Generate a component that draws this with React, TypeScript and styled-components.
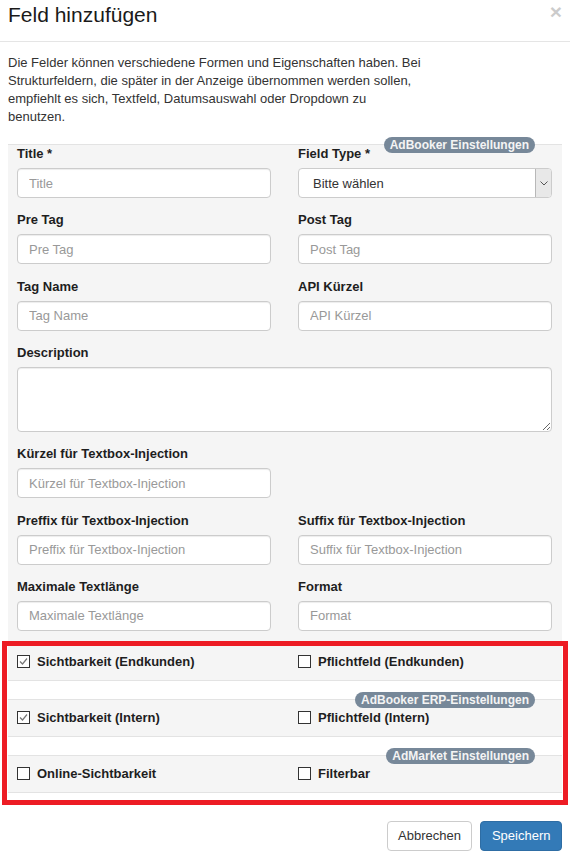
import styled, { createGlobalStyle } from "styled-components";

const GlobalStyle = createGlobalStyle`
  * {
    box-sizing: border-box;
  }
  html,
  body {
    margin: 0;
    background: #fff;
    overflow: hidden;
  }
  body {
    font-family: "Liberation Sans", Arial, sans-serif;
    font-size: 13px;
    color: #333;
  }
`;

const Modal = styled.div`
  width: 570px;
`;

const Header = styled.header`
  display: flex;
  justify-content: space-between;
  align-items: flex-start;
  height: 42px;
  padding: 0 8px;
  border-bottom: 1px solid #e5e5e5;
`;

const Title = styled.h4`
  margin: 0;
  font-size: 21px;
  font-weight: normal;
  line-height: 29px;
  color: #1a1a1a;
`;

const Close = styled.button`
  padding: 0;
  border: 0;
  background: none;
  font-family: inherit;
  font-size: 21px;
  font-weight: bold;
  line-height: 23px;
  color: #000;
  opacity: 0.2;
  cursor: pointer;
`;

const Body = styled.div`
  padding: 12px 8px 13px;
`;

const Intro = styled.p`
  margin: 0 0 18px;
  font-size: 13px;
  line-height: 18px;
  color: #333;
  white-space: nowrap;
`;

// grey settings block; $open drops the bottom edge so the next block continues it
const Panel = styled.section<{ $open?: boolean; $gap?: boolean }>`
  position: relative;
  background: #f5f5f5;
  border-top: 1px solid #e3e3e3;
  border-bottom: ${(p) => (p.$open ? "0" : "1px solid #e3e3e3")};
  margin-top: ${(p) => (p.$gap ? "18px" : "0")};
  padding: 0 10px 0 9px;
`;

const PanelTail = styled.div`
  background: #f5f5f5;
  border-bottom: 1px solid #e3e3e3;
  padding: 0 10px 0 9px;
`;

const Badge = styled.span`
  position: absolute;
  top: -8px;
  right: 27px;
  height: 16px;
  padding: 0 6px;
  border-radius: 8px;
  background: #778899;
  color: #f4f4f4;
  font-size: 12px;
  font-weight: bold;
  line-height: 16px;
  white-space: nowrap;
`;

const FieldGrid = styled.div`
  display: grid;
  grid-template-columns: 1fr 1fr;
  column-gap: 27px;
  row-gap: 13.33px;
  padding-bottom: 13px;
`;

const Field = styled.div<{ $wide?: boolean; $newRow?: boolean }>`
  display: flex;
  flex-direction: column;
  grid-column: ${(p) => (p.$wide ? "1 / -1" : p.$newRow ? "1" : "auto")};
`;

const Label = styled.label`
  display: block;
  margin-bottom: 5px;
  font-size: 13px;
  font-weight: bold;
  line-height: 18px;
  color: #1e1e1e;
`;

const Input = styled.input`
  width: 100%;
  height: 30px;
  padding: 0 11px;
  border: 1px solid #ccc;
  border-radius: 4px;
  box-shadow: inset 0 1px 1px rgba(0, 0, 0, 0.075);
  background: #fff;
  font-family: inherit;
  font-size: 13px;
  color: #555;
  &::placeholder {
    color: #999;
  }
`;

const TextArea = styled.textarea`
  width: 100%;
  height: 65px;
  padding: 6px 11px;
  border: 1px solid #ccc;
  border-radius: 4px;
  box-shadow: inset 0 1px 1px rgba(0, 0, 0, 0.075);
  font-family: inherit;
  font-size: 13px;
  resize: vertical;
`;

const SelectBox = styled.div`
  display: flex;
  height: 30px;
  border: 1px solid #ccc;
  border-radius: 4px;
  background: #fff;
  overflow: hidden;
`;

const Select = styled.select`
  flex: 1;
  appearance: none;
  border: 0;
  background: transparent;
  padding: 0 14px;
  font-family: inherit;
  font-size: 13px;
  color: #333;
  outline: none;
`;

const Arrow = styled.span`
  display: flex;
  align-items: center;
  justify-content: center;
  width: 16px;
  background: #e8e8e8;
  border-left: 1px solid #b8b8b8;
`;

const Highlight = styled.div`
  position: relative;
  &::after {
    content: "";
    position: absolute;
    top: -3px;
    left: -6px;
    right: -6px;
    bottom: -12px;
    border: 5px solid #ed1c24;
    pointer-events: none;
  }
`;

const FlagRow = styled.div`
  display: grid;
  grid-template-columns: 1fr 1fr;
  column-gap: 27px;
  align-items: center;
  height: 36px;
`;

const Check = styled.label`
  display: flex;
  align-items: center;
  gap: 7px;
  font-size: 13px;
  font-weight: bold;
  color: #1e1e1e;
`;

const Box = styled.span`
  display: flex;
  align-items: center;
  justify-content: center;
  width: 13px;
  height: 13px;
  border: 1px solid #333;
  background: #fff;
`;

const Footer = styled.footer`
  display: flex;
  justify-content: flex-end;
  gap: 8px;
  padding: 15px 8px 6px;
`;

const Button = styled.button<{ $primary?: boolean }>`
  height: 30px;
  padding: 0 10.5px;
  border-radius: 4px;
  border: 1px solid ${(p) => (p.$primary ? "#2e6da4" : "#ccc")};
  background: ${(p) => (p.$primary ? "#337ab7" : "#fff")};
  color: ${(p) => (p.$primary ? "#fff" : "#333")};
  font-family: inherit;
  font-size: 13px;
  cursor: pointer;
`;

const Flag = ({ label, checked }: { label: string; checked?: boolean }) => (
  <Check>
    <Box>
      {checked && (
        <svg width="11" height="11" viewBox="0 0 11 11">
          <path d="M2 5.5 L4.5 8 L9 2.5" fill="none" stroke="#777" strokeWidth="1.2" />
        </svg>
      )}
    </Box>
    {label}
  </Check>
);

const TextField = ({ label, wide, newRow }: { label: string; wide?: boolean; newRow?: boolean }) => (
  <Field $wide={wide} $newRow={newRow}>
    <Label>{label}</Label>
    <Input placeholder={label} />
  </Field>
);

const App = () => (
  <Modal>
    <GlobalStyle />
    <Header>
      <Title>Feld hinzufügen</Title>
      <Close>×</Close>
    </Header>
    <Body>
      <Intro>
        Die Felder können verschiedene Formen und Eigenschaften haben. Bei
        <br />
        Strukturfeldern, die später in der Anzeige übernommen werden sollen,
        <br />
        empfiehlt es sich, Textfeld, Datumsauswahl oder Dropdown zu
        <br />
        benutzen.
      </Intro>

      <Panel $open>
        <Badge>AdBooker Einstellungen</Badge>
        <FieldGrid>
          <Field>
            <Label>Title *</Label>
            <Input placeholder="Title" />
          </Field>
          <Field>
            <Label>Field Type *</Label>
            <SelectBox>
              <Select defaultValue="">
                <option value="">Bitte wählen</option>
              </Select>
              <Arrow>
                <svg width="8" height="5" viewBox="0 0 8 5">
                  <path d="M0.5 0.5 L4 4 L7.5 0.5" fill="none" stroke="#555" strokeWidth="1" />
                </svg>
              </Arrow>
            </SelectBox>
          </Field>
          <TextField label="Pre Tag" />
          <TextField label="Post Tag" />
          <TextField label="Tag Name" />
          <TextField label="API Kürzel" />
          <Field $wide>
            <Label>Description</Label>
            <TextArea />
          </Field>
          <TextField label="Kürzel für Textbox-Injection" />
          <TextField label="Preffix für Textbox-Injection" newRow />
          <TextField label="Suffix für Textbox-Injection" />
          <TextField label="Maximale Textlänge" />
          <TextField label="Format" />
        </FieldGrid>
      </Panel>

      <Highlight>
        <PanelTail>
          <FlagRow>
            <Flag label="Sichtbarkeit (Endkunden)" checked />
            <Flag label="Pflichtfeld (Endkunden)" />
          </FlagRow>
        </PanelTail>
        <Panel $gap>
          <Badge>AdBooker ERP-Einstellungen</Badge>
          <FlagRow>
            <Flag label="Sichtbarkeit (Intern)" checked />
            <Flag label="Pflichtfeld (Intern)" />
          </FlagRow>
        </Panel>
        <Panel $gap>
          <Badge>AdMarket Einstellungen</Badge>
          <FlagRow>
            <Flag label="Online-Sichtbarkeit" />
            <Flag label="Filterbar" />
          </FlagRow>
        </Panel>
      </Highlight>
    </Body>
    <Footer>
      <Button>Abbrechen</Button>
      <Button $primary>Speichern</Button>
    </Footer>
  </Modal>
);

export default App;
